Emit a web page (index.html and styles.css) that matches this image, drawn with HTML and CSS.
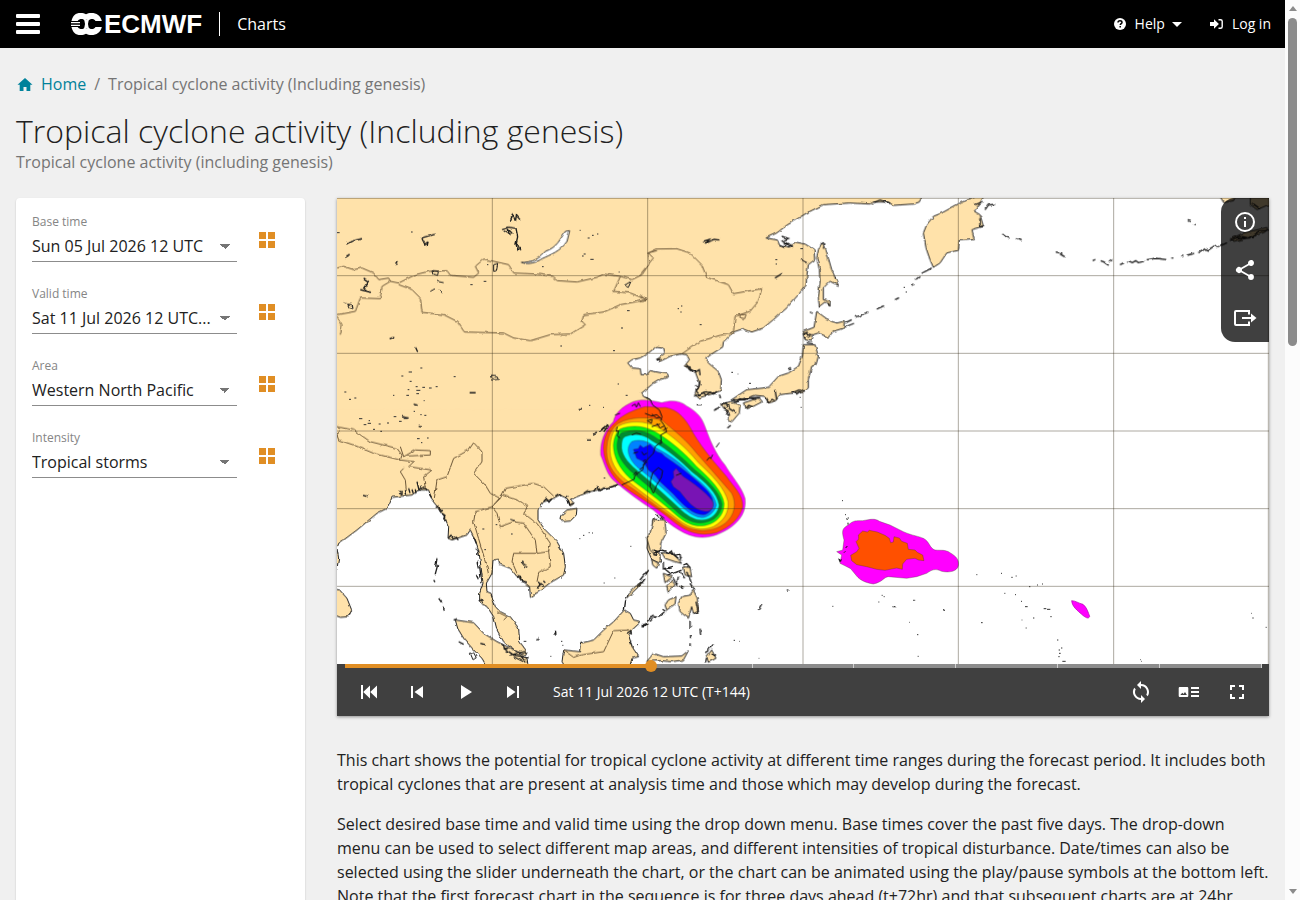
FILE: index.html
```html
<!DOCTYPE html>
<html lang="en">
<head>
<meta charset="utf-8">
<meta name="viewport" content="width=device-width, initial-scale=1">
<title>Tropical cyclone activity (Including genesis) - ECMWF Charts</title>
<link rel="stylesheet" href="styles.css">
</head>
<body>
<svg class="defs" width="0" height="0" aria-hidden="true">
  <symbol id="i-grid" viewBox="0 0 16 16"><path d="M0 0h7v7H0zM9 0h7v7H9zM0 9h7v7H0zM9 9h7v7H9z"/></symbol>
</svg>

<header class="topbar">
  <button class="menu" type="button" aria-label="Menu"><span></span><span></span><span></span></button>
  <a class="brand" href="#" aria-label="ECMWF">
    <svg viewBox="0 0 31 22" width="31" height="22" aria-hidden="true">
      <path fill="#fff" d="M9.500 0c2.500 0 4 .5 5.500 1.300C16.500.5 18 0 20.500 0c5 0 9 2.500 10.300 8H24.500C23.500 6.500 22.500 6 21 6c-1.500 0-2.500.5-3.200 1.500L15.500 6.500l-2 1C12.800 6.500 12 6 10.500 6 9 6 7.700 6.500 6.700 8H.5C1.800 2.500 4.500 0 9.500 0z"/>
      <path fill="#fff" d="M9.500 22c2.500 0 4-.5 5.500-1.300 1.500.8 3 1.300 5.500 1.300 5 0 9-2.500 10.300-8h-6.300c-1 1.500-2 2-3.500 2s-2.500-.5-3.200-1.500l-2.300 1-2-1c-.7 1-1.500 1.500-3 1.500s-2.800-.5-3.800-2H.5C1.800 19.500 4.500 22 9.500 22z"/>
      <path fill="#fff" d="M0 9h9v1.300H0zM0 11.700h9V13H0zM13.200 6.500h4.600L17 11l.8 4.500h-4.600L14 11z"/>
    </svg>
    <span>ECMWF</span>
  </a>
  <a class="app" href="#">Charts</a>
  <nav class="account">
    <button type="button">
      <svg viewBox="0 0 12 12" width="12" height="12" aria-hidden="true"><circle cx="6" cy="6" r="6" fill="#fff"/><path d="M4 4.600C4 3.200 5 2.700 6 2.700s2 .6 2 1.700c0 1.300-1.700 1.300-1.700 2.600M6.200 8v1.600" fill="none" stroke="#000" stroke-width="1.500"/></svg>
      Help
      <svg class="caret" viewBox="0 0 10 5" width="10" height="5" aria-hidden="true"><path fill="#fff" d="M0 0h10L5 5z"/></svg>
    </button>
    <a href="#">
      <svg viewBox="0 0 13 10" width="13" height="10" aria-hidden="true"><path fill="#fff" d="M0 3h4V.3L8.900 5 4 9.700V7H0z"/><path d="M8.500.8h2c1.200 0 1.700.5 1.700 1.500v5.400c0 1-.5 1.500-1.700 1.500h-2" fill="none" stroke="#fff" stroke-width="1.400"/></svg>
      Log in
    </a>
  </nav>
</header>

<main class="page">
  <nav class="crumbs" aria-label="Breadcrumb">
    <a href="#"><svg viewBox="0 0 16 14" width="16" height="14" aria-hidden="true"><path d="M8 1 .5 7.800h2.200V14h3.800v-4h3v4h3.800V7.800h2.200z"/></svg>Home</a>
    <span>/</span>
    <span>Tropical cyclone activity (Including genesis)</span>
  </nav>
  <h1>Tropical cyclone activity (Including genesis)</h1>
  <p class="subtitle">Tropical cyclone activity (including genesis)</p>

  <div class="columns">
    <form class="filters">
      <div class="field">
        <div class="control"><label for="base">Base time</label><select id="base"><option>Sun 05 Jul 2026 12 UTC</option></select></div>
        <button type="button" aria-label="All base times"><svg width="16" height="16"><use href="#i-grid"/></svg></button>
      </div>
      <div class="field">
        <div class="control"><label for="valid">Valid time</label><select id="valid"><option>Sat 11 Jul 2026 12 UTC...</option></select></div>
        <button type="button" aria-label="All valid times"><svg width="16" height="16"><use href="#i-grid"/></svg></button>
      </div>
      <div class="field">
        <div class="control"><label for="area">Area</label><select id="area"><option>Western North Pacific</option></select></div>
        <button type="button" aria-label="All areas"><svg width="16" height="16"><use href="#i-grid"/></svg></button>
      </div>
      <div class="field">
        <div class="control"><label for="intensity">Intensity</label><select id="intensity"><option>Tropical storms</option></select></div>
        <button type="button" aria-label="All intensities"><svg width="16" height="16"><use href="#i-grid"/></svg></button>
      </div>
    </form>

    <div class="content">
      <section class="player">
        <div class="map">
          <svg class="chart" viewBox="0 0 2796 1398" role="img" aria-label="Tropical storm probability, Western North Pacific">
            <defs>
              <filter id="rough" x="-30" y="-30" width="2856" height="1458" filterUnits="userSpaceOnUse"><feTurbulence type="fractalNoise" baseFrequency="0.05" numOctaves="2" seed="4"/><feDisplacementMap in="SourceGraphic" scale="9" xChannelSelector="R" yChannelSelector="G"/></filter>
            </defs>
            <rect width="2796" height="1398" fill="#fff"/>
            <g filter="url(#rough)">
              <g class="land">
                <!-- northern and eastern Asia -->
                <path transform="translate(909)" d="M-940-20H850L838 12 820 18 760 22 745 12 700 12 690 18 630 15 550 20 500 45 440 82 410 105 378 120 412 126 420 145 450 150 465 132 495 138 522 155 524 185 505 200 500 235 498 262 475 290 440 330 400 365 370 390 335 402 310 392 280 402 250 432 248 447 215 468 197 482 205 495 235 520 244 545 242 578 215 588 175 600 165 585 180 560 165 520 140 510 133 505 148 485 140 470 122 468 90 475 60 490 50 485 75 465 70 448 50 445 25 465 0 480-24 485-37 495-24 510 1 512 3 530 21 530 30 518 83 528 85 537 60 545 35 560 5 585 10 595 30 605 50 650 50 670-940 670Z"/>
                <!-- southern and south-east Asia -->
                <path transform="translate(0 666)" d="M-30-20H960L990 60 900 175 850 195 759 215 700 238 712 250 700 258 690 235 668 225 640 240 620 245 603 270 603 300 625 330 660 365 680 400 685 440 680 465 640 488 605 515 580 532 578 500 540 470 520 445 487 432 485 418 468 420 465 460 448 490 450 515 462 520 475 560 490 575 520 590 545 625 548 665 570 695 565 705 530 690 500 665 480 630 470 590 450 560 428 548 428 520 438 490 432 440 425 390 415 360 400 330 390 345 345 360 333 355 335 320 322 290 305 265 285 240 275 210 245 210 225 225 165 232 150 265 120 280 60 330 20 360 5 370 0 385 5 415 0 445-30 450Z"/>
                <g transform="translate(0 666)">
                  <path d="M-20 505 8 510 30 535 44 570 35 590 10 592-20 580ZM355 600 410 608 440 640 480 665 530 690 570 715 575 750H455L435 715 410 690 380 655 362 625ZM672 285 690 270 720 265 718 285 700 303 680 305 668 298ZM730 670 770 660 800 630 830 605 862 570 880 580 890 600 912 605 885 630 875 645 885 680 905 710 885 715 875 750H690L675 725 680 690 728 695ZM948 300 965 300 970 430 945 420 930 385 932 350 945 340ZM922 480 905 500 868 535 875 520 900 495Z"/>
                </g>
                <g transform="translate(909)">
                  <path d="M535 155 545 135 555 145 565 180 575 215 595 262 570 250 550 270 550 305 570 310 570 325 555 312 538 325 535 300 540 250 538 215 530 180ZM530 340 560 362 590 375 612 370 612 390 580 400 565 418 535 405 520 410 515 430 495 425 490 400 522 388ZM490 440 525 440 535 475 528 500 515 505 505 545 505 570 490 580 460 585 420 590 405 610 385 615 375 595 345 592 310 605 275 605 320 575 385 568 415 535 445 525 475 505 487 475ZM310 615 355 600 365 612 340 625 318 632ZM245 618 270 610 300 620 298 645 275 672 262 665 268 645 250 630Z"/>
                  <path d="M960 15 905 45 880 55 860 80 850 105 858 150 870 185 880 208 900 195 920 165 955 157 958 128 1003 125 996 95 1030 85 1020 50 1003 40 1020 15 1040-20Z"/>
                </g>
                <g transform="translate(909 906)">
                  <path d="M40 58 75 60 78 100 62 130 62 150 45 165 30 150 20 115 30 100ZM35 178 55 190 50 205 38 195ZM65 158 100 160 125 190 105 185 75 175ZM130 200 150 202 155 230 135 225ZM70 220 97 230 75 248ZM95 240 105 255 85 275 80 258ZM75 315 85 300 108 290 105 312 80 330ZM125 290 150 285 160 270 172 295 175 335 160 340 155 320 145 355 120 335 115 310ZM20 485 40 460 70 470 125 468 145 452 130 480 95 485 60 482ZM200 470 215 450 228 475 205 487Z"/>
                </g>
                <path d="M2640-20H2700L2690 8 2660 14ZM2740-20H2820V20L2790 22 2760 35 2740 20ZM2680 122 2720 105 2790 88 2790 100 2740 118 2690 130Z"/>
              </g>
              <path class="plain" d="M-10 636H935V690H-10Z"/>
              <path class="lake" d="M553 193C585 195 610 180 625 160 660 148 668 125 685 100L698 98 690 130C670 160 640 170 615 182 600 192 575 202 553 193Z"/>
              <!-- national borders -->
              <g class="border">
                <path d="M0 210 20 205 50 215 75 210 110 225 125 245 155 240 160 250 185 255 235 230 275 220 330 218 340 232 410 238 425 225 415 205 440 183 515 200 530 225 600 228 645 235 660 248 720 252 780 238 800 228 850 235 830 280 880 285 930 305 850 320 800 342 740 350 735 370 745 380 700 408 640 410 580 428 530 420 500 405 382 402 360 370 320 350 255 343 250 300 225 275 185 260M160 250 135 265 130 302 70 300 55 340 0 350M0 355 15 380 10 410M850 235 885 245 915 230 935 200 932 165 960 158"/>
                <path transform="translate(909)" d="M0 230 20 205 40 180 25 165 50 153 110 152 150 165 185 200 200 238 265 260 280 287 365 272 355 310 330 340 285 355 280 405 240 412 180 430 125 468M0 290 20 308 0 312M300 350h18l-4 12-14-3z"/>
                <g transform="translate(0 666)"><path d="M0 20 50 30 100 65 180 85 195 105 190 120 110 100 50 75 5 60 0 45 10 30M190 80 200 110 235 90 280 92 280 105 210 108M190 120 230 125 215 140 285 150 260 170 265 205M200 145 190 155 205 180 208 210M292 235 300 180 330 170 350 115 395 90 410 68 435 95 435 125 410 160 445 195 460 220 490 235 505 205 590 190 620 200 650 228M490 235 465 260 415 275 410 305 420 340 450 440 455 465M470 255 495 225 540 240 575 260 560 280 600 310 640 370 635 395 600 400 595 360 560 310 530 305 490 320 480 280 465 260M600 400 530 400 525 425 540 460M635 395 640 440 605 460 600 485M480 575 510 590 500 600M680 690 710 712 730 705 800 695 830 632 875 630"/></g>
              </g>
              <!-- lakes, islands and other small outlines -->
              <g class="ink">
                <path d="M520 68l6-16 10 14 2-14 12 14M495 95l20-8 22 4 5 25-4 18 14 22M500 98l16 10-2-14 12 12M536 135l6 20 8-12M253 120l40-12M255 122l8 16 10-6-2 10M28 138l15-8 32-8M25 178l10-6M175 192l6 8M80 240l14 10-14 20 20 14M70 275l32 8M158 422l14-4M236 448l6 14M398 584h18M725 632h10M195 656l20 4M230 618l12 4M245 682l10 2"/>
                <path class="fine" d="M288 218l16 2-2 12-12-4zM300 250l20 4M280 280l14-8M305 276l10 12M470 200l12-4-4 22-8 2zM862 262l20-12-8 18zM32 318l14 2 2 12-12-4zM20 312l8 3M460 534l20 2 4 8-18 2z"/>
                <path transform="translate(909)" d="M190 130l18-6-10 12 24-12 16 2M425 115l20 6-18 8 20 10M430 135l25 10M405 240l22-14M483 184l20 10M268 632l20 12M225 635l15-8M280 610l40-10 38-2M700 14l20-8 30 10M170 620h15M165 595l30-14 35 6M140 500l10 16 20 6M180 548l-6 25M455 585l24-10M615 375l20-10M645 358l40-16M710 333l22-10M765 305l12-6M815 262l8-4M828 244l10-8M845 226l30-16M612 388l30-12M410 605l-5-30M497 406l18 4-12 8M500 434l20 4"/>
                <path transform="translate(909)" d="M136 505l14 2 2 10 16 4 10-6 2 14M166 562l8 8-6 8 10 12 12-6 8 8 12-10 12 6 8-8M238 590l4 10M246 618l10-4 2 12 8-6 2 12M250 632l14 6-4 10 10 4M222 638l8-6M262 690l10-8M272 606l16 4 12-8 14 4 14-6 20 4M318 630l8-8 12 4M378 598l8 14 10-8 8 4M446 516l6-8M460 582l10 6 14-12 10 4M495 422l-4-14 12-6M510 342l8 4M544 134l10 4-4 14M562 314l6 8M60 490l-8-6 10-2M420 142l10 6 6-8M444 150l8-10 6 8"/>
                <path transform="translate(1809)" d="M105 20l26-10M135 35l10-14 20-2M120 60v25h12M190 108l18 14M228 122l14 6M347 162l20 4M360 168l14 8M458 188l8-4M482 188l10 4 14 10M510 185l6 4M540 200l12-6M565 188l12 6 10-6 8 6 20-5M620 185l28-4 34 4M694 180h6M724 176l6-2M740 172l22-6M775 164l22-12 8 4 20-14 6 6 30-14M870 128l30-14 26 6 30-20 32-4M743 65l9 2M760 78l6 2M890 120l40 0M940 18l20 14"/>
                <path transform="translate(0 666)" d="M78 226l14 4M185 212l8 12M195 212v14M205 210l4 14M215 205l4 14M225 208l4 12M235 208l2 12M240 185l6 25 8-10M252 206l12-4 6 8M276 222l8 10M296 262l10-4 4 12 8 2M316 280l8 6-4 10 8 6M334 354l8-8 6 10 10-4 6 8M300 415l-4 25M302 435l-8 30M290 480l4 6M305 535l10 14M318 560l4 12M410 350l8 20M416 385l8 6-2 16M420 425l4 20M428 440l4 30M418 465l6 12M430 485l4 6M425 545l8-6 4 8M365 665l15 8M350 600l10-4M430 670l14 4M500 685l30 20 45 8M520 705l50-12M530 710l30 15M548 705l20 22M490 672l10 4 2 10 12-2M540 470l10 2 4 12 14 2M610 495l-6-10M625 488l-6-5M600 505l12-14 8 6M620 244l8-8 8 10 8-10M655 228l10-6 8 6M686 234l8-6M694 240l4 14 10-4M740 220l12-8 8 4M770 214l10-14 6 12 14-8 20-2 24-10M750 60h12M768 42l12-6M790 32l20-18M800 35l10-12M650 640l8-6M655 632l2 12M598 660l10-4M918 615l12-5M930 600l20-12M925 465l10-15M900 500l20-20M862 570l4-30M870 640l10-8 4 8M878 672l8-8M728 675l6-10"/>
                <path class="fine" transform="translate(0 666)" d="M400 700l10-2 8 15-10 6zM552 425l20 14-6 4zM520 298l14 4"/>
                <path transform="translate(909 906)" d="M40 160l25-10 30 10 20 15M38 150l14 4-2 12-10-2M86 160l10-8 8 14 16-4 2 14M130 195l10-4 10 12M70 185v22l30-8M72 205l20 16M85 225l40-15M100 235l10 20 5-25M120 215l14 20M118 258l14 8M140 215l15 35M150 250l14 20M120 180l4-10M60 50l10 8M50 44l6 6M0 240l20-25M8 250l10-14M5 378l20-6M30 365l8-10M40 355l10-6M55 350l18-14M68 328l8 6M150 362v25M152 405v10M150 430v10M180 386l2 18M168 305l6 30-8 6M355 330l10-18M444 270h4M200 460l8-20M210 445l10-12M215 462l12 6M196 488l4-14M597 178l8 8M618 140l6-4M910 330h6M820 301h4M758 320h8"/>
              </g>
            </g>

            <!-- primary storm area -->
            <g class="storm" transform="translate(759 576)">
              <path fill="#f0f" d="M70 95C75 70 95 50 130 35 150 28 175 28 215 38 240 30 270 30 290 48 320 65 335 80 345 110 360 150 375 190 405 225 425 260 455 290 465 325 470 365 450 390 425 410 390 435 350 448 315 440 270 430 230 395 190 360 150 335 110 305 75 275 50 255 45 225 32 195 30 160 40 125 70 95Z"/>
              <path fill="#ff5000" d="M75 98C95 75 130 60 165 50 195 50 205 55 225 52 265 58 290 90 310 130 340 180 380 225 410 260 430 290 460 315 458 350 450 385 420 412 380 428 330 441 290 427 250 395 200 350 140 320 95 285 60 255 42 215 40 175 40 140 55 115 75 98Z"/>
              <path fill="#ffa000" d="M85 100C120 80 170 80 215 90 250 120 290 150 320 190 360 235 400 280 425 310 440 340 435 375 405 400 370 426 320 429 280 407 230 370 180 335 130 297 80 267 50 230 50 185 50 145 62 115 85 100Z"/>
              <path fill="#ff0" d="M85 108C120 90 165 93 200 110 245 135 290 175 325 218 365 255 405 295 414 335 417 370 400 393 370 410 335 424 300 417 265 389 215 350 165 315 115 275 75 245 58 210 60 170 62 140 70 118 85 108Z"/>
              <path fill="#00f014" d="M90 117C120 105 160 105 195 125 245 155 285 190 320 230 360 265 398 305 402 340 403 370 385 392 360 402 325 415 295 405 262 378 215 335 165 300 120 265 88 235 70 200 70 165 72 140 80 125 90 117Z"/>
              <path fill="#008c32" d="M95 128C130 118 160 118 190 138 240 170 280 205 315 240 355 272 392 310 396 342 395 368 378 388 355 395 325 405 295 397 262 367 215 322 170 285 130 250 100 225 80 195 81 165 83 145 86 135 95 128Z"/>
              <path fill="#0ff" d="M105 140C130 130 160 130 185 152 235 180 275 215 305 245 350 280 382 310 387 345 385 365 370 382 350 388 322 396 295 382 265 352 220 310 175 270 140 240 110 215 92 190 95 165 96 150 98 145 105 140Z"/>
              <path fill="#0082ff" d="M125 155C150 145 180 155 200 175 240 195 280 225 305 255 345 285 374 315 379 345 373 370 350 383 335 383 305 380 280 355 250 325 210 285 170 255 140 230 115 205 105 175 125 155Z"/>
              <path fill="#00f" d="M130 178 145 176 150 165 160 173 180 163 200 185 215 190 225 200 245 213C285 240 320 270 350 300 378 330 375 362 345 374 310 377 280 345 250 312L210 275 195 255 175 240 160 215 140 205Z"/>
              <path fill="#7814b4" stroke="none" d="M250 245 258 235 270 250 280 260C310 280 345 305 365 330 378 350 362 366 345 364 310 360 290 330 270 305L250 290 243 275 252 262Z"/>
              <path class="coast" d="M166 22 180 28 188 45 208 60 216 80 212 92 222 105 230 125 212 135 214 155 195 170 190 190 175 205 162 220 158 240 135 255 132 268 95 285M182 268 188 248 205 233 218 242 214 262 200 285 190 310 180 290ZM125 48l10-6 4 10 6-14 6 12M165 70l20 8 15-4 16 14M185 72l14 12 10-2M172 92l14-4-2 12zM200 100l10 14 12-6M125 135l14-6 14 4M75 75l15-5M35 122l6-10 4 6 8-14 2 8M82 110l-4 14 8-2-4 16 8 6M130 190l14-4M155 185l6 10 10-6M258 256l16-6M350 212l8-10 4 4 6-12M378 172l10-14M220 120l12-6M208 375l15 10M185 110l25-8M158 215l8-6 4 8-12 10M148 240l12-10M130 255l8-10 4 10M208 150l8 6-6 8"/>
            </g>
            <g class="storm" transform="translate(909 906)">
              <path fill="#f0f" d="M625 75C640 60 650 62 668 62 690 58 705 54 718 64L750 75 790 95C820 108 835 108 850 115 870 125 868 145 885 150 905 152 915 148 930 158 950 170 958 180 955 198 950 216 925 218 905 214 885 204 875 210 860 220L830 230 800 235 745 230C730 232 730 245 700 252 675 248 660 240 650 228L632 206 600 190 605 165 590 155 608 150 612 120C605 95 605 85 625 75Z"/>
              <path fill="#ff5000" d="M655 105 668 93 682 96 688 91 712 96 735 106 748 115 752 128 760 126 762 110 778 114 785 124 802 130 805 148 825 150 832 157 848 165 852 182 835 180 825 175 800 178 788 192 787 208 770 204 735 211 710 208 680 200 650 194 635 182 632 166 650 155 657 145 648 125 656 117Z"/>
              <path class="coast" d="M620 55l2 5M624 68v6M622 138l-5 6M596 176l6 8 2-6M612 158l4-4"/>
            </g>
            <path fill="#f0f" stroke="#a0a" stroke-width="2" d="M2204 1208C2215 1208 2225 1216 2238 1219 2250 1228 2254 1245 2258 1255 2255 1265 2244 1258 2234 1249 2222 1238 2205 1226 2204 1208Z"/>

            <!-- scattered islets -->
            <path class="specks" d="M0 104h8M222 102h5M615 206h5M450 200h4M440 250h8M400 260h7M752 120h6M780 108h4M765 112h5M740 168h6M735 174h5M760 184h10M728 97h3M845 222h3M870 338h8M852 390h6M670 444h5M828 458h6M250 510h6M215 522h10M193 534h6M350 536h6M218 550h6M236 566h6M256 568h8M276 570h8M296 566h6M238 577h12M212 575h5M238 587h8M208 592h8M22 582h6M36 604h6M52 600h6M168 592h4M260 608h3M262 652h6M230 640h4M866 592h6M842 558h4M756 622h4M798 628h3M66 662h10M95 668h4M80 680h8M92 676h10M125 678h6M150 675h6M170 656h8M186 670h8M200 662h12M108 694h6M130 700h5M250 650h4M270 720h5M1315 185h6M1316 198h4M1390 152h8M1022 332h4M1032 324h4M1030 342h4M1088 380h6M1183 523h5M1236 556h6M1357 514h6M1202 528h2M1388 598h3M1391 628h3M1700 268h4M1706 282h4M800 840h5M436 993h6M476 980h5M442 1055h5M522 1008h5M240 722h8M252 734h4M738 1012h4M755 1004h3M765 1005h3M727 1022h3M880 1045h3M800 1155h3M832 1140h3M672 1140h3M640 1375h3M672 1330h4M676 1342h3M560 1330h8M900 1340h3M1515 908h3M1524 950h3M1532 960h4M1486 1225h3M1624 1212h3M1634 1192h3M1640 1196h3M1740 1310h4M1716 1273h2M1742 1375h3M1190 1327h4M1206 1330h2M1265 1381h2M1918 1130h3M1992 1126h3M2023 1138h4M2036 1134h3M2076 1166h4M2100 1161h3M2115 1158h3M2002 1186h3M2034 1190h3M2052 1210h3M2064 1226h8M2120 1232h8M2130 1234h10M2140 1256h4M2088 1260h4M2054 1266h2M1932 1274h5M2066 1290h3M2160 1326h4M2165 1356h4M2172 1350h4M2166 1366h5M2164 1376h4M2176 1390h10M2746 1260h4M2742 1246h2M2786 1288h3M2410 1385h2M2412 1390h2"/>
            <path class="graticule" d="M0 1H2796M0 233H2796M0 466H2796M0 699H2796M0 932H2796M0 1165H2796M466 0V1398M932 0V1398M1398 0V1398M1864 0V1398M2330 0V1398M2794 0V1398"/>
          </svg>
          <div class="tools">
            <button type="button" aria-label="Information"><svg viewBox="0 0 24 24" width="24" height="24"><path d="M11 7h2v2h-2zm0 4h2v6h-2zm1-9a10 10 0 1 0 0 20 10 10 0 0 0 0-20zm0 18a8 8 0 1 1 0-16 8 8 0 0 1 0 16z"/></svg></button>
            <button type="button" aria-label="Share"><svg viewBox="0 0 24 24" width="24" height="24"><path d="M18 16.080c-.76 0-1.440.3-1.960.77L8.910 12.700c.05-.23.09-.46.09-.7s-.04-.47-.09-.7l7.050-4.110A3 3 0 1 0 15 5c0 .24.04.47.09.7L8.040 9.810a3 3 0 1 0 0 4.380l7.120 4.160c-.05.21-.08.43-.08.65A2.920 2.920 0 1 0 18 16.080z"/></svg></button>
            <button type="button" aria-label="Export"><svg viewBox="0 0 24 24" width="24" height="24"><path d="M16 8.500V5H3c-.6 0-1 .4-1 1v12c0 .6.400 1 1 1h13v-3.500M9 12h9" fill="none" stroke="#fff" stroke-width="2"/><path d="M18 7.500 23.500 12 18 16.500z"/></svg></button>
          </div>
        </div>
        <div class="bar">
          <div class="timeline"><input type="range" min="0" max="9" value="3" aria-label="Forecast step"></div>
          <div class="buttons">
            <button type="button" aria-label="First"><svg viewBox="0 0 24 24" width="24" height="24"><path d="M4 5h2v14H4zM13 5.500v13L6.200 12zM20 5.500v13L13.200 12z"/></svg></button>
            <button type="button" aria-label="Previous"><svg viewBox="0 0 24 24" width="24" height="24"><path d="M6 6h2v12H6zm3.500 6 8.500 6V6z"/></svg></button>
            <button type="button" aria-label="Play"><svg viewBox="0 0 24 24" width="24" height="24"><path d="M8 5v14l11-7z"/></svg></button>
            <button type="button" aria-label="Next"><svg viewBox="0 0 24 24" width="24" height="24"><path d="M6 18l8.500-6L6 6v12zM16 6v12h2V6z"/></svg></button>
            <span class="step">Sat 11 Jul 2026 12 UTC (T+144)</span>
            <button type="button" aria-label="Loop"><svg viewBox="0 0 24 24" width="24" height="24"><path d="M12 4V1L8 5l4 4V6a6 6 0 0 1 5.300 8.800l1.460 1.460A8 8 0 0 0 12 4zm0 14a6 6 0 0 1-5.300-8.800L5.240 7.740A8 8 0 0 0 12 20v3l4-4-4-4z"/></svg></button>
            <button type="button" aria-label="Legend"><svg viewBox="0 0 24 24" width="24" height="24"><path fill-rule="evenodd" d="M3 7h7c.8 0 1.300.5 1.300 1.300v7.400c0 .8-.5 1.300-1.300 1.300H3c-.8 0-1.300-.5-1.300-1.300V8.300C1.700 7.500 2.200 7 3 7zm.3 8h6.600L8 12l-1.500 2-1.200-1.200zM14 7h8v2h-8zM14 11h8v2h-8zM14 15h8v2h-8z"/></svg></button>
            <button type="button" aria-label="Full screen"><svg viewBox="0 0 24 24" width="24" height="24"><path d="M7 14H5v5h5v-2H7zM5 10h2V7h3V5H5zm12 7h-3v2h5v-5h-2zM14 5v2h3v3h2V5z"/></svg></button>
          </div>
        </div>
      </section>
      <p>This chart shows the potential for tropical cyclone activity at different time ranges during the forecast period. It includes both tropical cyclones that are present at analysis time and those which may develop during the forecast.</p>
      <p>Select desired base time and valid time using the drop down menu. Base times cover the past five days. The drop-down menu can be used to select different map areas, and different intensities of tropical disturbance. Date/times can also be selected using the slider underneath the chart, or the chart can be animated using the play/pause symbols at the bottom left. Note that the first forecast chart in the sequence is for three days ahead (t+72hr) and that subsequent charts are at 24hr</p>
    </div>
  </div>
</main>
<div class="scrollbar" aria-hidden="true"><i class="up"></i><i class="thumb"></i><i class="down"></i></div>
</body>
</html>
```
FILE: styles.css
```css
* { box-sizing: border-box; }
body {
  margin: 0;
  height: 100vh;
  overflow: hidden;
  padding-right: 15px;
  background: #f0f0f0;
  color: #212121;
  font: 16px/24px "Open Sans", "Noto Sans", sans-serif;
}
.defs { position: absolute; }
button {
  display: flex;
  align-items: center;
  justify-content: center;
  padding: 0;
  border: 0;
  background: none;
  color: inherit;
  font: inherit;
  cursor: pointer;
}
a { color: inherit; text-decoration: none; }

.topbar {
  display: flex;
  align-items: center;
  height: 48px;
  padding: 0 14px 0 16px;
  background: #000;
  color: #fff;
}
.menu { flex-direction: column; gap: 4px; width: 24px; }
.menu span { width: 24px; height: 4px; border-radius: 1px; background: #fff; }
.brand { display: flex; align-items: center; gap: 2px; margin-left: 31px; }
.brand span { font: bold 26px/26px "Liberation Sans", Arial, sans-serif; }
.app { margin-left: 17px; padding-left: 17px; border-left: 1px solid #fff; }
.account { display: flex; gap: 28px; margin-left: auto; font-size: 14px; }
.account button, .account a { display: flex; align-items: center; gap: 9px; }
.account .caret { margin-left: -2px; }

.page { padding: 24px 16px 0; }
.crumbs { display: flex; gap: 8px; color: #757575; }
.crumbs a { display: flex; align-items: center; gap: 8px; padding-left: 1px; color: #00829b; }
.crumbs svg { fill: #00829b; }
h1 { margin: 16px 0 0; font-size: 32px; line-height: 38px; font-weight: 300; }
.subtitle { margin: 0 0 24px; color: #757575; }

.columns { display: grid; grid-template-columns: 289px minmax(0, 1fr); gap: 32px; }
.filters {
  display: flex;
  flex-direction: column;
  gap: 24px;
  padding: 16px;
  border-radius: 4px;
  background: #fff;
  box-shadow: 0 1px 2px rgba(0, 0, 0, .2);
}
.field { display: flex; gap: 22px; align-items: center; }
.control { display: flex; flex-direction: column; flex: 1; }
.control label { color: #858585; font-size: 12px; line-height: 16px; }
select {
  height: 32px;
  padding: 0 24px 0 0;
  border: 0;
  border-bottom: 1px solid #8c8c8c;
  border-radius: 0;
  appearance: none;
  background: linear-gradient(to bottom left, #757575 50%, transparent 50%) right 12px top 14px / 5px 5px no-repeat,
    linear-gradient(to bottom right, #757575 50%, transparent 50%) right 7px top 14px / 5px 5px no-repeat;
  color: #212121;
  font: inherit;
}
.field button { width: 16px; margin: 4px 14px 0 0; }
.field button svg { fill: #e08e24; }

.content { min-width: 0; }
.player { box-shadow: 0 1px 3px rgba(0, 0, 0, .4); }
.map { position: relative; }
.chart { display: block; width: 100%; }
.land path { fill: #ffe2aa; stroke: #222; stroke-width: 3; }
.plain { fill: #ffe2aa; }
.lake { fill: #fff; stroke: #333; stroke-width: 3; }
.border path { fill: none; stroke: #6b5638; stroke-width: 3; }
.ink path, .coast { fill: none; stroke: #1c1c1c; stroke-width: 4; }
.ink .fine { stroke-width: 3; }
.storm path { stroke: #3c3c28; stroke-width: 1; }
.storm .coast { stroke: #151515; stroke-width: 3; }
.specks { fill: none; stroke: #333; stroke-width: 3; }
.graticule { fill: none; stroke: rgba(50, 40, 20, .4); stroke-width: 3; }
.tools {
  position: absolute;
  top: 0;
  right: 0;
  border-radius: 14px 0 0 14px;
  background: rgba(0, 0, 0, .75);
}
.tools button { width: 48px; height: 48px; }
.tools svg, .buttons svg { fill: #fff; }

.bar { position: relative; background: #404040; color: #fff; }
.timeline {
  height: 4px;
  margin: 0 7px 0 8px;
  background:
    linear-gradient(#e08e24, #e08e24) 0 0 / 33.4% 100% no-repeat,
    repeating-linear-gradient(to left, #d0d0d0 0 1px, #8c8c8c 1px 11.11%);
}
.timeline input {
  display: block;
  width: calc(100% + 12px);
  height: 4px;
  margin: 0 -6px;
  appearance: none;
  background: none;
}
.timeline input::-webkit-slider-thumb {
  appearance: none;
  width: 12px;
  height: 12px;
  border-radius: 50%;
  background: #e08e24;
}
.buttons { display: flex; align-items: center; height: 48px; padding: 0 8px; }
.buttons button { width: 48px; height: 48px; }
.step { margin: 0 auto 0 16px; font-size: 14px; }
.content > p { margin: 0 0 16px; }
.content > .player { margin-bottom: 32px; }

.scrollbar {
  position: fixed;
  top: 0;
  right: 0;
  bottom: 0;
  display: flex;
  flex-direction: column;
  align-items: center;
  justify-content: space-between;
  width: 15px;
  padding: 6px 0;
  background: #fcfcfc;
}
.scrollbar .up, .scrollbar .down { border: 4px solid transparent; }
.scrollbar .up { border-top: 0; border-bottom: 5px solid #8b8b8b; }
.scrollbar .down { border-bottom: 0; border-top: 5px solid #8b8b8b; }
.scrollbar .thumb { width: 9px; height: 328px; margin: 7px 0 auto; border-radius: 5px; background: #8b8b8b; }
```
